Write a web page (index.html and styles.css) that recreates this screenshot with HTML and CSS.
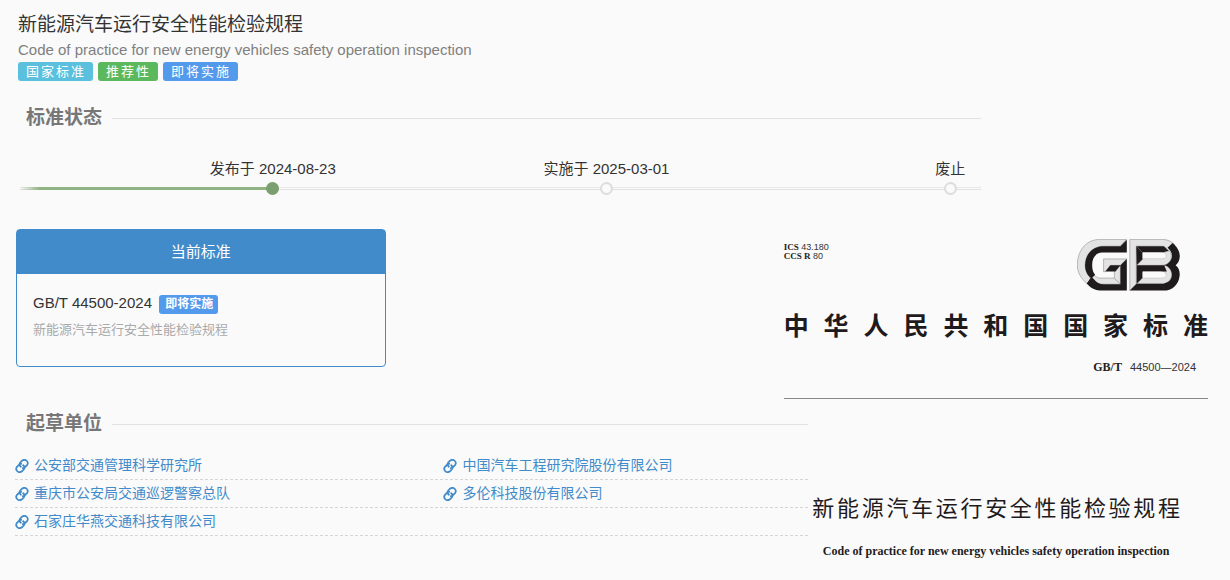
FILE: index.html
```html
<!DOCTYPE html>
<html lang="zh-CN">
<head>
    <meta charset="utf-8">
    <title>新能源汽车运行安全性能检验规程</title>
    <link rel="stylesheet" href="styles.css">
</head>
<body>
    <svg width="0" height="0" class="sprite">
        <symbol id="icon_link" viewBox="0 0 24 24">
            <path d="M12 16c3 0 5-1 6-3l3-3c2-3 1-5-1-7s-5-2-8 0L9 6c-2 3-1 6 2 8" />
            <path d="M12 8C9 8 7 9 6 11l-3 3c-2 3-1 5 1 7s5 2 8 0l3-3c2-3 1-6-2-8" />
        </symbol>
    </svg>

    <header class="page-header">
        <h1>新能源汽车运行安全性能检验规程</h1>
        <p class="subtitle">Code of practice for new energy vehicles safety operation inspection</p>
        <div class="tags">
            <span class="tag tag-info">国家标准</span>
            <span class="tag tag-success">推荐性</span>
            <span class="tag tag-primary">即将实施</span>
        </div>
    </header>

    <section class="status">
        <h2 class="section-title">标准状态</h2>
        <ol class="timeline">
            <li class="done"><div class="step">发布于 2024-08-23</div></li>
            <li><div class="step">实施于 2025-03-01</div></li>
            <li><div class="step">废止</div></li>
        </ol>
    </section>

    <main>
        <div class="row current">
            <article class="card">
                <h3>当前标准</h3>
                <div class="card-body">
                    <p class="code">GB/T 44500-2024 <span class="label">即将实施</span></p>
                    <p class="name">新能源汽车运行安全性能检验规程</p>
                </div>
            </article>

            <div class="cover-head">
                <div class="cover-top">
                    <p class="ics"><b>ICS</b> 43.180<br><b>CCS R</b> 80</p>
                    <svg class="gb-logo" viewBox="51 41 306 154">
                        <g stroke="#999" stroke-width="2" fill="#e3e3e3">
                            <!-- G -->
                            <path d="M198 42H118C75 43 52 78 52 119C52 141 64 158 80 173L96 156C82 146 75 134 75 118C76 86 96 64 126 62H178Z" />
                            <path d="M96 140L88 155C97 168 110 174 128 175H180L163 157H119C108 156 103 150 96 140Z" />
                            <path d="M130 100H199L180 119H150L135 138H130Z" />
                            <path d="M180 119L165 137H162V157L180 175Z" />
                            <!-- B -->
                            <path d="M208 42H307C323 43 333 49 341 58L323 75C317 67 311 62 299 62H227V174L208 194Z" />
                            <path d="M229 119L248 99H303C311 99 315 94 315 90C315 85 311 81 304 81L327 76C333 88 333 103 322 112C316 118 309 119 300 119Z" />
                            <path d="M229 174L246 156H302C311 156 315 152 315 146C315 140 310 137 303 137L312 119C325 124 333 135 332 148C331 164 318 174 302 174Z" />
                        </g>
                        <g fill="#1f1b1d">
                            <path d="M199 43V81H126C105 82 96 98 96 118C96 133 100 142 105 147L94 158C82 150 75 137 75 118C76 86 96 64 126 62H180Z" />
                            <path d="M80 173L94 153L102 161C109 170 118 175 130 175H180V119L199 100V194H119C101 192 89 184 80 173Z" />
                            <path d="M150 119H180L165 137H135Z" />
                            <path d="M227 62L246 81H305L323 76L309 62Z" />
                            <path d="M227 62L246 81V100L228 119Z" />
                            <path d="M320 67L335 53C350 65 358 82 356 96C355 107 350 114 344 119C353 125 357 137 356 149C353 178 333 194 308 194H208L228 174H301C320 173 333 163 333 146C332 133 322 119 308 119C325 115 333 102 333 91C333 81 328 73 320 67Z" />
                            <path d="M228 119H310L318 137H246V156L228 174Z" />
                        </g>
                        <g fill="#fafafa">
                            <path d="M246 81H304C311 81 315 85 315 90C315 95 311 99 304 99H246Z" />
                            <path d="M246 138H304C311 138 315 142 315 147C315 152 311 156 304 156H246Z" />
                        </g>
                    </svg>
                </div>
                <p class="nation">中华人民共和国国家标准</p>
                <p class="cover-code"><b>GB/T</b>44500—2024</p>
            </div>
        </div>

        <div class="row">
            <section class="units">
                <h2 class="section-title">起草单位</h2>
                <div class="unit-row">
                    <a href="#"><svg><use href="#icon_link" /></svg>公安部交通管理科学研究所</a>
                    <a href="#"><svg><use href="#icon_link" /></svg>中国汽车工程研究院股份有限公司</a>
                </div>
                <div class="unit-row">
                    <a href="#"><svg><use href="#icon_link" /></svg>重庆市公安局交通巡逻警察总队</a>
                    <a href="#"><svg><use href="#icon_link" /></svg>多伦科技股份有限公司</a>
                </div>
                <div class="unit-row">
                    <a href="#"><svg><use href="#icon_link" /></svg>石家庄华燕交通科技有限公司</a>
                </div>
            </section>

            <div class="cover-title">
                <p class="cover-name">新能源汽车运行安全性能检验规程</p>
                <p class="cover-en">Code of practice for new energy vehicles safety operation inspection</p>
            </div>
        </div>
    </main>
</body>
</html>
```
FILE: styles.css
```css
*, *::after {
    box-sizing: border-box;
}

body {
    margin: 0;
    padding: 12px 22px 16px 15px;
    background: #fafafa;
    color: #333;
    font-family: "Liberation Sans", "Noto Sans CJK SC", sans-serif;
    font-size: 15px;
}

h1, h2, h3, p, ol {
    margin: 0;
    padding: 0;
    font-weight: normal;
}

.sprite {
    position: absolute;
}

.page-header {
    padding-left: 3px;
}

.page-header h1 {
    font-size: 19px;
    line-height: 26px;
}

.subtitle {
    line-height: 24px;
    color: #808080;
}

.tags {
    display: flex;
    gap: 5px;
}

.tag {
    padding: 0 7px 0 8px;
    border-radius: 3px;
    color: #fff;
    font-size: 13px;
    line-height: 19px;
    letter-spacing: 2px;
}

.tag-info {
    background: #5bc0de;
}

.tag-success {
    background: #5cb85c;
}

.tag-primary {
    background: #5399ec;
}

/* section headings with a rule running to the right */
.section-title {
    display: flex;
    align-items: center;
    gap: 10px;
    padding-left: 11px;
    font-size: 19px;
    font-weight: bold;
    line-height: 28px;
    color: #777;
}

.section-title::after {
    content: "";
    flex: 1;
    border-top: 1px solid #e2e2e2;
}

.status {
    width: 81%;
    margin-top: 23px;
}

/* timeline */
.timeline {
    display: grid;
    grid-template-columns: 33.4% 35.3% 1fr;
    margin: 24px 0 0 5px;
    padding-right: 16px;
    list-style: none;
    background:
        linear-gradient(to right, transparent, #8fb383 20px) left bottom 5px / 26% 3px no-repeat,
        linear-gradient(#e8e8e8 1px, transparent 1px, transparent 2px, #e2e2e2 2px) left bottom 5px / 100% 3px no-repeat;
}

.timeline li {
    display: flex;
    justify-content: flex-end;
}

.step {
    display: flex;
    flex-direction: column;
    align-items: center;
    line-height: 26px;
}

.step::after {
    content: "";
    width: 13px;
    height: 13px;
    border: 2px solid #ddd;
    border-radius: 50%;
    background: #fafafa;
}

.done .step::after {
    border-color: #7b9f70;
    background: #7b9f70;
}

.row {
    display: flex;
    justify-content: space-between;
}

.current {
    margin-top: 34px;
    padding-left: 1px;
}

/* current standard */
.card {
    width: 31%;
    border: 1px solid #428bca;
    border-radius: 4px;
    align-self: flex-start;
}

.card h3 {
    background: #428bca;
    color: #fff;
    font-size: 15px;
    line-height: 44px;
    text-align: center;
}

.card-body {
    padding: 16px 16px 22px;
}

.code {
    line-height: 26px;
}

.label {
    display: inline-block;
    margin-left: 3px;
    padding: 0 5px 0 6px;
    border-radius: 3px;
    background: #5399ec;
    color: #fff;
    font-size: 12px;
    font-weight: bold;
    line-height: 19px;
}

.name {
    color: #aaa;
    font-size: 13px;
    line-height: 28px;
}

/* cover of the standard */
.cover-head {
    width: 35.6%;
    padding-top: 10px;
    border-bottom: 1px solid #888;
}

.cover-top {
    display: flex;
    justify-content: space-between;
    padding-right: 28px;
}

.ics {
    padding-top: 4px;
    font-size: 9px;
    line-height: 9px;
}

.ics b, .cover-code b {
    font-family: "Liberation Serif", serif;
    color: #222;
}

.gb-logo {
    width: 103px;
    height: 52px;
}

.nation {
    margin-top: 16px;
    color: #1f1b1d;
    font-size: 25px;
    font-weight: bold;
    line-height: 38px;
    text-align-last: justify;
}

.cover-code {
    padding: 12px 12px 21px 0;
    font-size: 11px;
    line-height: 20px;
    text-align: right;
}

.cover-code b {
    margin-right: 8px;
    font-size: 12px;
}

/* drafting units */
.units {
    width: 66.5%;
    padding-top: 11px;
}

.units .section-title {
    margin-bottom: 14px;
}

.unit-row {
    display: grid;
    grid-template-columns: 54% 46%;
    border-bottom: 1px dashed #d5d5d5;
}

.unit-row a {
    display: flex;
    align-items: center;
    gap: 5px;
    color: #428bca;
    font-size: 14px;
    line-height: 27px;
    text-decoration: none;
}

.unit-row svg {
    width: 14px;
    height: 14px;
    fill: none;
    stroke: #428bca;
    stroke-width: 3;
}

.cover-title {
    flex: 1;
    padding: 92px 28px 0 4px;
    color: #1f1b1d;
}

.cover-name {
    font-size: 22px;
    line-height: 36px;
    text-align-last: justify;
}

.cover-en {
    margin-top: 14px;
    font-family: "Liberation Serif", serif;
    font-size: 12px;
    font-weight: bold;
    line-height: 20px;
    text-align: center;
}
```
